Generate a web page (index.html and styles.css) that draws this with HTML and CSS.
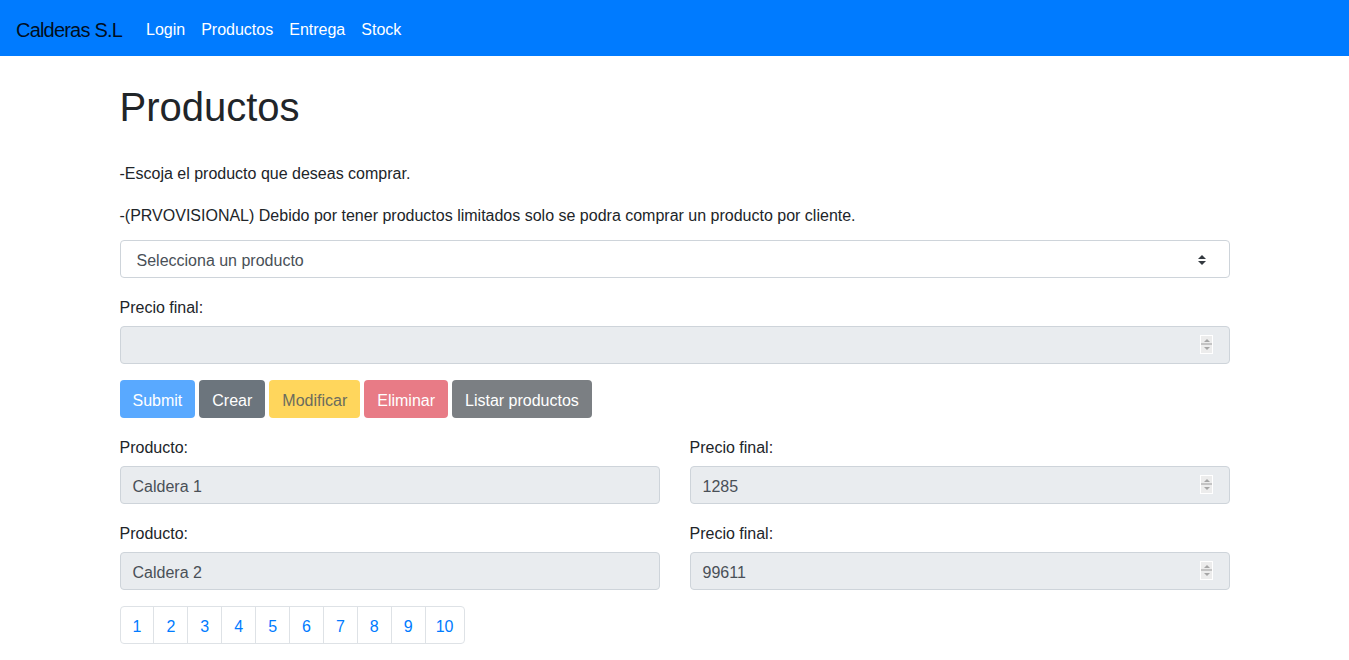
FILE: index.html
```html
<!DOCTYPE html>
<html lang="es">
<head>
<meta charset="utf-8">
<title>Productos</title>
<link rel="stylesheet" href="styles.css">
</head>
<body>
<nav class="navbar">
  <a class="brand" href="#">Calderas S.L</a>
  <ul class="nav">
    <li><a href="#">Login</a></li>
    <li><a href="#">Productos</a></li>
    <li><a href="#">Entrega</a></li>
    <li><a href="#">Stock</a></li>
  </ul>
</nav>
<main class="container">
  <h1 class="title">Productos</h1>
  <p class="text">-Escoja el producto que deseas comprar.</p>
  <p class="text last">-(PRVOVISIONAL) Debido por tener productos limitados solo se podra comprar un producto por cliente.</p>
  <div class="form-group">
    <div class="select">
      <span>Selecciona un producto</span>
      <svg class="select-arrow" width="8" height="10" viewBox="0 0 8 10"><path d="M4 0 L8 4 H0 Z M0 6 H8 L4 10 Z" fill="#343a40"/></svg>
    </div>
  </div>
  <div class="form-group">
    <label class="label">Precio final:</label>
    <div class="field disabled"><span></span><i class="spin"></i></div>
  </div>
  <div class="buttons">
    <button class="btn btn-primary">Submit</button>
    <button class="btn btn-secondary">Crear</button>
    <button class="btn btn-warning">Modificar</button>
    <button class="btn btn-danger">Eliminar</button>
    <button class="btn btn-dark">Listar productos</button>
  </div>
  <div class="row">
    <div class="col">
      <label class="label">Producto:</label>
      <div class="field disabled"><span>Caldera 1</span></div>
    </div>
    <div class="col">
      <label class="label">Precio final:</label>
      <div class="field disabled"><span>1285</span><i class="spin"></i></div>
    </div>
  </div>
  <div class="row">
    <div class="col">
      <label class="label">Producto:</label>
      <div class="field disabled"><span>Caldera 2</span></div>
    </div>
    <div class="col">
      <label class="label">Precio final:</label>
      <div class="field disabled"><span>99611</span><i class="spin"></i></div>
    </div>
  </div>
  <ul class="pagination">
    <li><a href="#">1</a></li>
    <li><a href="#">2</a></li>
    <li><a href="#">3</a></li>
    <li><a href="#">4</a></li>
    <li><a href="#">5</a></li>
    <li><a href="#">6</a></li>
    <li><a href="#">7</a></li>
    <li><a href="#">8</a></li>
    <li><a href="#">9</a></li>
    <li><a class="wide" href="#">10</a></li>
  </ul>
</main>
</body>
</html>
```
FILE: styles.css
```css
* { box-sizing: border-box; }
html, body { margin: 0; padding: 0; }
body {
  font-family: "Liberation Sans", Arial, sans-serif;
  font-size: 16px;
  line-height: 24px;
  color: #212529;
  background: #fff;
}
a { text-decoration: none; }

.navbar {
  background: #007bff;
  height: 56px;
  padding: 8px 16px;
  display: flex;
  align-items: center;
}
.brand {
  font-size: 20px;
  line-height: 30px;
  letter-spacing: -0.8px;
  color: rgba(0,0,0,.9);
  margin-right: 16px;
  padding: 7px 0 3px;
}
.nav {
  list-style: none;
  margin: 0;
  padding: 0;
  display: flex;
}
.nav a {
  display: block;
  padding: 10px 8px 6px;
  color: #fff;
}

.container {
  width: 1140px;
  margin: 0 auto;
  padding: 0 15px;
}
.title {
  font-size: 40px;
  line-height: 48px;
  font-weight: 500;
  margin: 27px 0 29px;
}
.text { margin: 0 0 16px; padding-top: 2px; }
.text.last { margin-bottom: 12px; }

.form-group { margin-bottom: 16px; }
.label { display: block; padding-top: 2px; margin-bottom: 6px; }

.select {
  height: 38px;
  border: 1px solid #ced4da;
  border-radius: 4px;
  padding: 8px 16px 4px;
  color: #495057;
  display: flex;
  align-items: center;
  justify-content: space-between;
}
.select-arrow { margin-right: 7px; margin-top: -3px; }

.field {
  position: relative;
  height: 38px;
  border: 1px solid #ced4da;
  border-radius: 4px;
  padding: 8px 12px 4px;
  color: #495057;
}
.field.disabled { background: #e9ecef; }
.spin {
  position: absolute;
  right: 16px;
  top: 8px;
  width: 13px;
  height: 19px;
  border: 1px solid #fff;
  background-image: linear-gradient(#ececec 0 7px, #c4c4c4 7px 9px, #ececec 9px);
}
.spin::before, .spin::after {
  content: "";
  position: absolute;
  left: 3px;
  border-left: 3px solid transparent;
  border-right: 3px solid transparent;
}
.spin::before { top: 3px; border-bottom: 3px solid #a6a6a6; }
.spin::after { bottom: 3px; border-top: 3px solid #a6a6a6; }

.buttons {
  display: flex;
  gap: 4px;
  margin-bottom: 16px;
}
.btn {
  font-family: inherit;
  font-size: 16px;
  line-height: 24px;
  padding: 8px 12px 4px;
  border: 1px solid transparent;
  border-radius: 4px;
  color: #fff;
}
.btn-primary { background: #59a9ff; }
.btn-secondary { background: #6c757d; }
.btn-warning { background: #ffd65c; color: #6b6c5e; }
.btn-danger { background: #e87b86; }
.btn-dark { background: #7b7f83; }

.row {
  display: grid;
  grid-template-columns: 1fr 1fr;
  column-gap: 30px;
  margin-bottom: 16px;
}

.pagination {
  list-style: none;
  margin: 0;
  padding: 0;
  display: flex;
}
.pagination a {
  display: block;
  padding: 8px 12px 4px;
  line-height: 24px;
  color: #007bff;
  border: 1px solid #dee2e6;
  margin-left: -1px;
}
.pagination a.wide { padding: 8px 11px 4px 10px; }
.pagination li:first-child a { margin-left: 0; border-radius: 4px 0 0 4px; }
.pagination li:last-child a { border-radius: 0 4px 4px 0; }
```
